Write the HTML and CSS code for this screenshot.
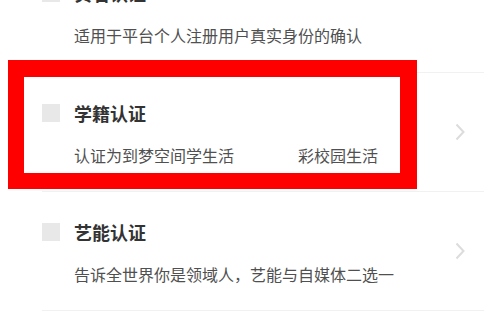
FILE: index.html
```html
<!DOCTYPE html>
<html lang="zh-CN">
<head>
<meta charset="utf-8">
<link rel="stylesheet" href="styles.css">
</head>
<body>
<div class="list">
  <div class="item">
    <div class="main">
      <div class="head"><span class="check"></span><span class="title">实名认证</span></div>
      <div class="desc">适用于平台个人注册用户真实身份的确认</div>
    </div>
  </div>
  <div class="item">
    <div class="main">
      <div class="head"><span class="check"></span><span class="title">学籍认证</span></div>
      <div class="desc">认证为到梦空间学生活<span class="gap"></span>彩校园生活</div>
    </div>
    <svg class="chev" viewBox="0 0 10 18" width="10" height="18"><path d="M1.5 1.5 L8.5 9 L1.5 16.5" fill="none" stroke="#dcdcdc" stroke-width="2"/></svg>
  </div>
  <div class="item">
    <div class="main">
      <div class="head"><span class="check"></span><span class="title">艺能认证</span></div>
      <div class="desc">告诉全世界你是领域人，艺能与自媒体二选一</div>
    </div>
    <svg class="chev" viewBox="0 0 10 18" width="10" height="18"><path d="M1.5 1.5 L8.5 9 L1.5 16.5" fill="none" stroke="#dcdcdc" stroke-width="2"/></svg>
  </div>
</div>
<div class="highlight"></div>
</body>
</html>
```
FILE: styles.css
```css
html, body {
  margin: 0;
  padding: 0;
  background: #ffffff;
  overflow: hidden;
}
body {
  width: 492px;
  height: 324px;
  position: relative;
  font-family: "Noto Sans CJK SC", "Noto Sans", sans-serif;
}
.list {
  margin-top: -48px;
}
.item {
  display: flex;
  align-items: center;
  margin-left: 42px;
  margin-right: 8px;
  padding-right: 19px;
  height: 118px;
  border-bottom: 1px solid #f1f1f1;
}
.list .item:first-child {
  height: 120px;
}
.main {
  flex: 1;
  display: flex;
  flex-direction: column;
  padding-top: 28px;
  padding-bottom: 25px;
  gap: 19px;
}
.head {
  display: flex;
  align-items: center;
  gap: 14px;
  height: 24px;
}
.check {
  width: 18px;
  height: 18px;
  background: #e8e8e8;
}
.title {
  font-size: 18px;
  line-height: 24px;
  font-weight: 700;
  color: #333333;
}
.desc {
  margin-left: 32px;
  font-size: 16px;
  line-height: 22px;
  color: #505050;
  white-space: nowrap;
}
.gap {
  display: inline-block;
  width: 64px;
}
.chev {
  flex: none;
  display: block;
}
.highlight {
  position: absolute;
  left: 8px;
  top: 60px;
  width: 409px;
  height: 129px;
  box-sizing: border-box;
  border: 16px solid #fe0000;
  border-top-width: 17px;
  border-right-width: 17px;
}
```
